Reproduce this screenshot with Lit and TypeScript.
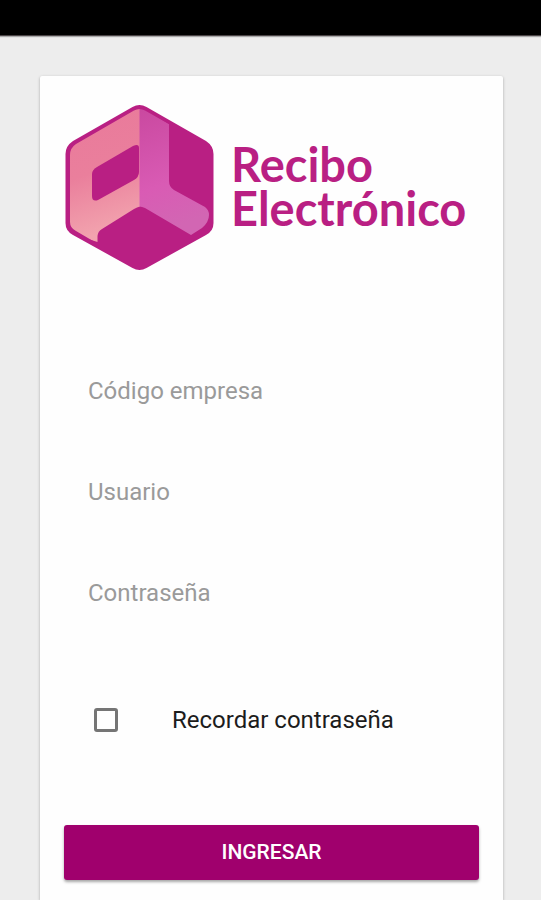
import { LitElement, html, css } from "lit";
import { customElement } from "lit/decorators.js";

@customElement("brand-logo")
class BrandLogo extends LitElement {
  static styles = css`
    :host {
      display: flex;
      align-items: center;
      gap: 16px;
      color: #b91f83;
    }
    .cube {
      flex: none;
      width: 150px;
      height: 166px;
    }
    .name {
      margin: 0;
      padding-bottom: 2px;
      font: 700 47px/44px Lato, "Open Sans", sans-serif;
    }
    .line {
      display: block;
    }
  `;

  render() {
    return html`
      <svg class="cube" viewBox="65 104 150 166" aria-hidden="true">
        <defs>
          <linearGradient id="left" x1="0" y1="0" x2="0.2" y2="1">
            <stop offset="0" stop-color="#e9799b" />
            <stop offset="0.55" stop-color="#ea7f9c" />
            <stop offset="1" stop-color="#f2a3ae" />
          </linearGradient>
          <linearGradient id="right" x1="0" y1="0" x2="0.2" y2="1">
            <stop offset="0" stop-color="#c9489f" />
            <stop offset="0.65" stop-color="#d95bb4" />
            <stop offset="1" stop-color="#d266b3" />
          </linearGradient>
          <clipPath id="inner">
            <path d="M134 110.500Q139.500 107.500 145 110.500L204 144Q210 148 210 155V222Q210 228 204 231L145 265Q139.500 268 134 265L76 231Q70 228 70 222V155Q70 148 76 144Z" />
          </clipPath>
        </defs>
        <path fill="#b91f83" d="M132.500 107Q139.500 103 146.500 107L206 141Q213.500 146 213.500 154V223Q213.500 231 206 235L146.500 268Q139.500 272 132.500 268L73 235Q65.500 231 65.500 223V154Q65.500 146 73 141Z" />
        <g clip-path="url(#inner)">
          <path fill="url(#left)" d="M140 106L60 151V230L97.500 242V236Q98 231 102 229L134 209Q137 207 140 206.500Z" />
          <path fill="url(#right)" d="M139.500 106L169 124V181Q169 187 174 190L205 207Q209 210 209 215Q209 222 202 228L191 235L145 208Q142 206.500 139.500 206.500Z" />
        </g>
        <path fill="#b91f83" d="M97 167L133 146Q139 143 139 148V172Q139 177 134 180L98 200Q92 202 92 196V174Q92 170 97 167Z" />
      </svg>
      <h1 class="name">
        <span class="line">Recibo</span>
        <span class="line">Electrónico</span>
      </h1>
    `;
  }
}

@customElement("app-root")
class AppRoot extends LitElement {
  static styles = css`
    :host {
      display: flex;
      flex-direction: column;
      min-height: 100vh;
      background: #ededed;
      color: #1c1c1c;
      font: 400 24px/32px Roboto, sans-serif;
    }
    * {
      box-sizing: border-box;
    }
    .status {
      height: 36px;
      background: #000;
      border-bottom: 1px solid #4a4446;
      box-shadow: 0 1px 1px #aaa;
    }
    .card {
      flex: 1;
      display: flex;
      flex-direction: column;
      margin: 40px 38px 0 40px;
      padding: 28px 24px 20px;
      background: #fefefe;
      border-radius: 2px 2px 0 0;
      box-shadow: 0 1px 3px rgba(0, 0, 0, 0.3);
    }
    .logo {
      margin-left: 1px;
    }
    .fields {
      display: flex;
      flex-direction: column;
      gap: 45px;
      margin-top: 93px;
      padding: 0 24px;
    }
    .field {
      width: 100%;
      height: 56px;
      padding: 0;
      border: 0;
      outline: 0;
      background: none;
      color: inherit;
      font: inherit;
    }
    .field::placeholder {
      color: #9a9a9a;
      opacity: 1;
    }
    .remember {
      display: flex;
      align-items: center;
      gap: 54px;
      height: 56px;
      margin: 71px 30px 0;
    }
    .tick {
      appearance: none;
      flex: none;
      width: 24px;
      height: 24px;
      margin: 0;
      border: 3px solid #757575;
      border-radius: 3px;
    }
    .tick:checked {
      background: #a0006d;
      border-color: #a0006d;
    }
    .submit {
      height: 55px;
      margin-top: 77px;
      padding: 0 16px 2px;
      border: 0;
      border-radius: 3px;
      background: #a0006d;
      box-shadow: 0 2px 3px rgba(0, 0, 0, 0.35);
      color: #fff;
      font: 500 21px/32px Roboto, sans-serif;
    }
  `;

  render() {
    return html`
      <div class="status"></div>
      <main class="card">
        <brand-logo class="logo"></brand-logo>
        <div class="fields">
          <input class="field" type="text" placeholder="Código empresa" aria-label="Código empresa" />
          <input class="field" type="text" placeholder="Usuario" aria-label="Usuario" />
          <input class="field" type="password" placeholder="Contraseña" aria-label="Contraseña" />
        </div>
        <div class="remember">
          <input class="tick" type="checkbox" id="remember" />
          <label for="remember">Recordar contraseña</label>
        </div>
        <button class="submit" type="button">INGRESAR</button>
      </main>
    `;
  }
}
